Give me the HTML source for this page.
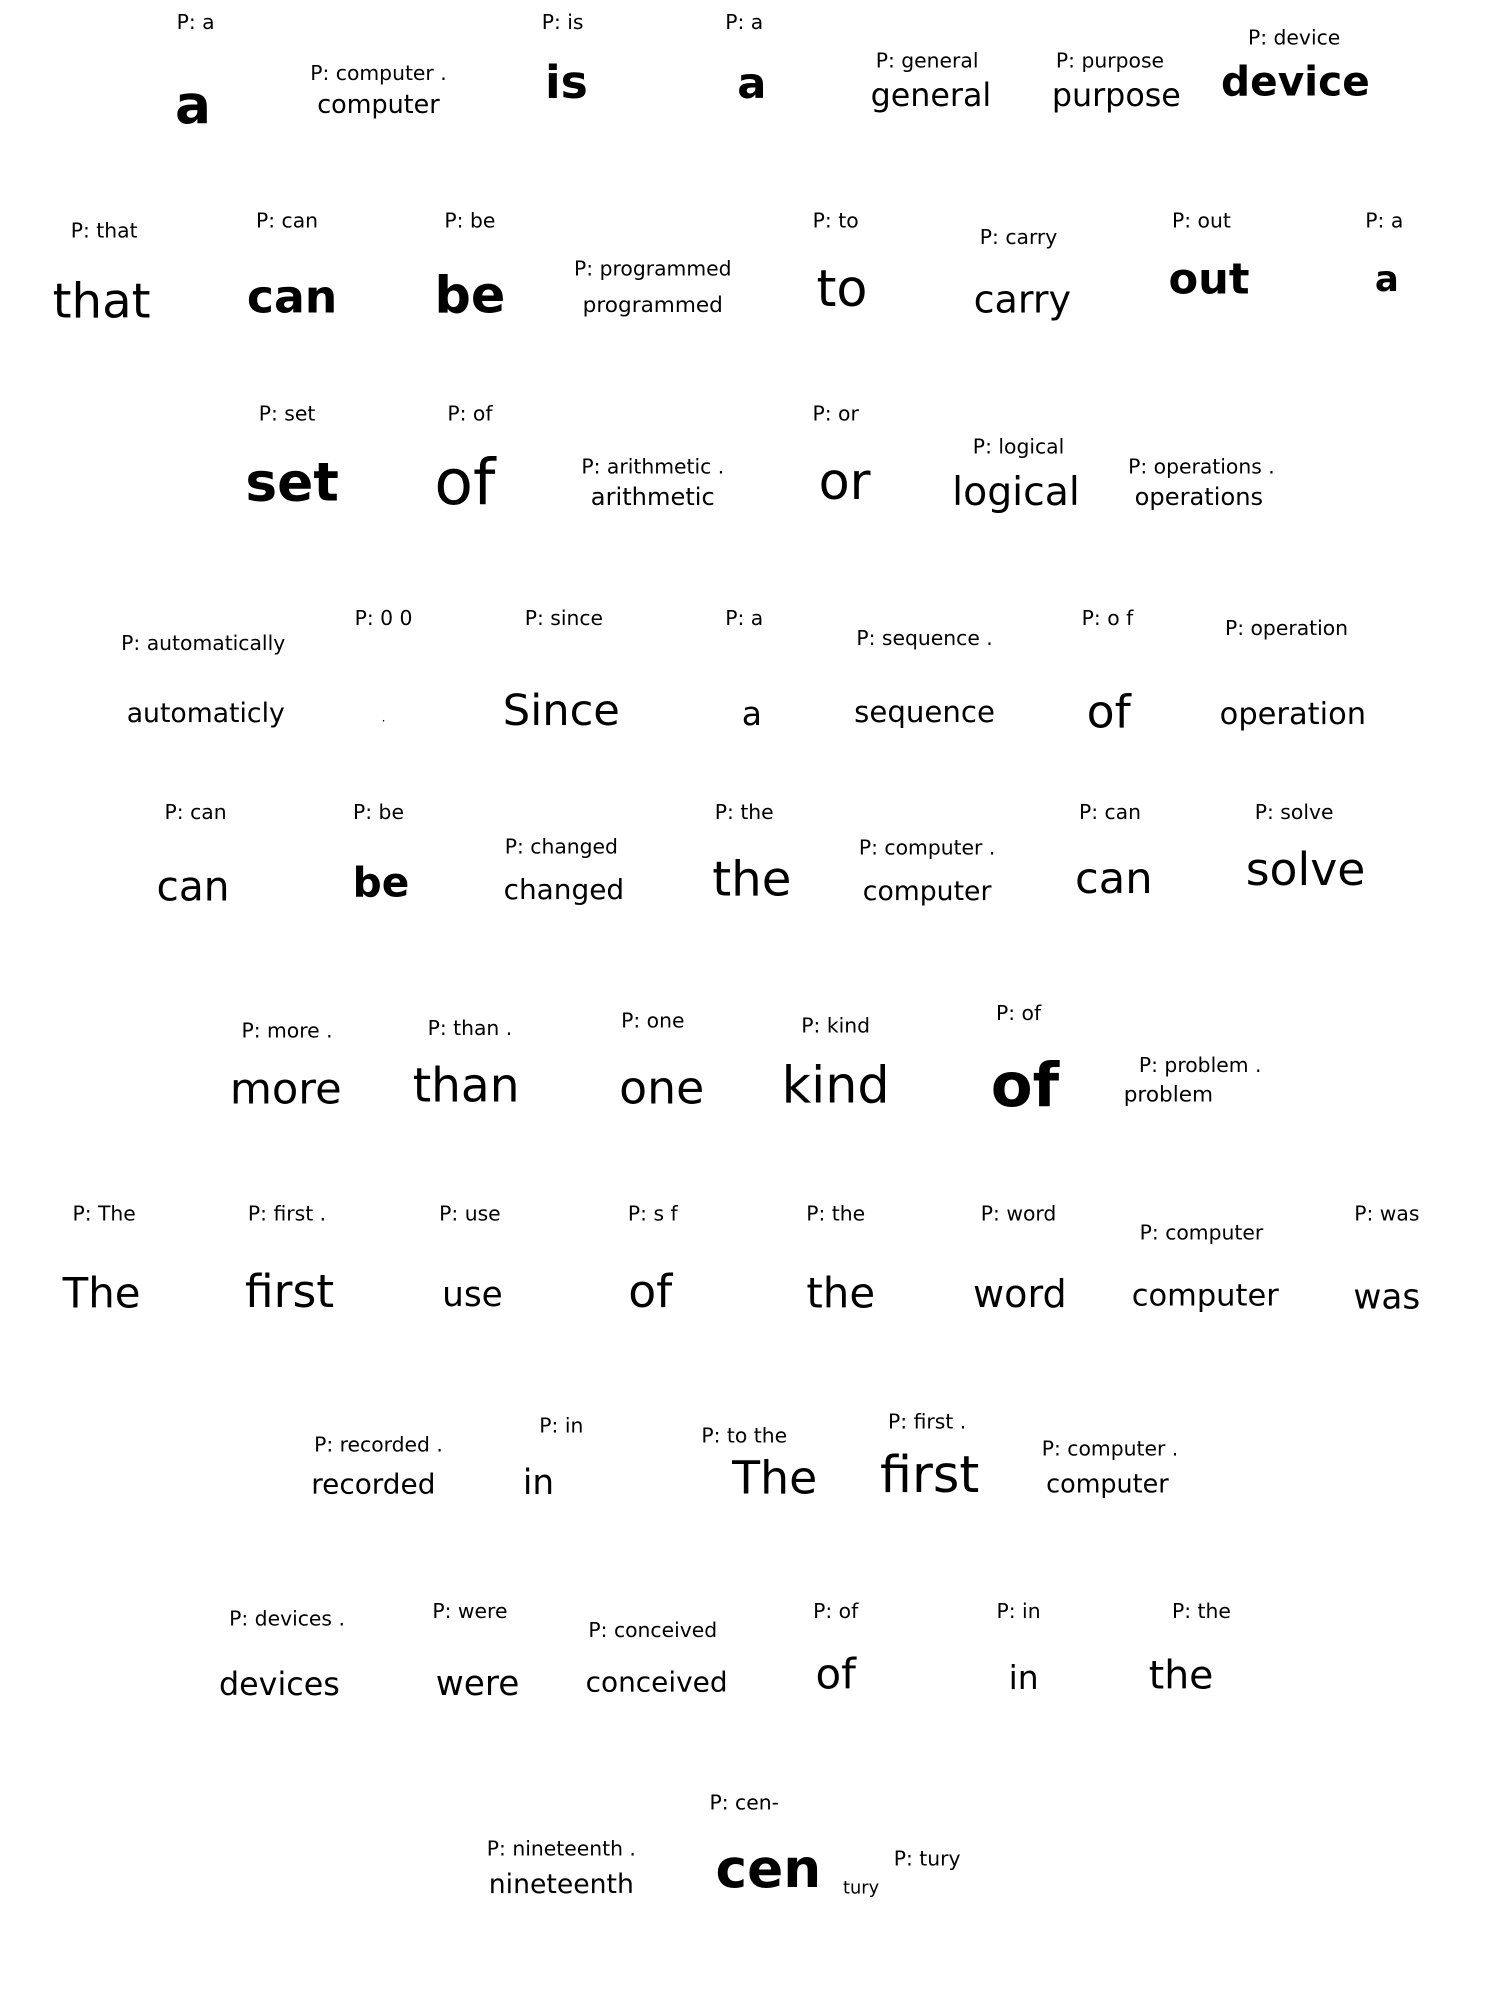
<!DOCTYPE html>
<html><head><meta charset="utf-8"><style>
html,body{margin:0;padding:0;background:#fff;width:1487px;height:1990px;overflow:hidden}
#c{position:absolute;left:0;top:0;width:1171px;height:1567px;transform:scale(1.27);transform-origin:0 0}
.l{position:absolute;transform:translateX(-50%);font:16px "DejaVu Sans","Liberation Sans",sans-serif;color:#000;white-space:nowrap;line-height:1}
.w{position:absolute;transform:translate(-50%,-50%);font-family:"DejaVu Sans","Liberation Sans",sans-serif;color:#000;white-space:nowrap;line-height:1}
.b{font-weight:bold}
</style></head><body><div id="c">
<div class="l" style="left:154px;top:10px">P: a</div><div class="w b" style="left:152px;top:83px;font-size:42px">a</div>
<div class="l" style="left:298px;top:50px">P: computer .</div><div class="w" style="left:298px;top:82px;font-size:20px">computer</div>
<div class="l" style="left:443px;top:10px">P: is</div><div class="w b" style="left:446px;top:66px;font-size:36px">is</div>
<div class="l" style="left:586px;top:10px">P: a</div><div class="w b" style="left:592px;top:66px;font-size:34px">a</div>
<div class="l" style="left:730px;top:40px">P: general</div><div class="w" style="left:733px;top:75px;font-size:25px">general</div>
<div class="l" style="left:874px;top:40px">P: purpose</div><div class="w" style="left:879px;top:75px;font-size:25px">purpose</div>
<div class="l" style="left:1019px;top:22px">P: device</div><div class="w b" style="left:1020px;top:64px;font-size:32px">device</div>

<div class="l" style="left:82px;top:174px">P: that</div><div class="w" style="left:80px;top:237px;font-size:38px">that</div>
<div class="l" style="left:226px;top:166px">P: can</div><div class="w b" style="left:230px;top:235px;font-size:36px">can</div>
<div class="l" style="left:370px;top:166px">P: be</div><div class="w b" style="left:370px;top:233px;font-size:40px">be</div>
<div class="l" style="left:514px;top:204px">P: programmed</div><div class="w" style="left:514px;top:241px;font-size:17px">programmed</div>
<div class="l" style="left:658px;top:166px">P: to</div><div class="w" style="left:663px;top:228px;font-size:40px">to</div>
<div class="l" style="left:802px;top:179px">P: carry</div><div class="w" style="left:805px;top:237px;font-size:30px">carry</div>
<div class="l" style="left:946px;top:166px">P: out</div><div class="w b" style="left:952px;top:220px;font-size:34px">out</div>
<div class="l" style="left:1090px;top:166px">P: a</div><div class="w b" style="left:1092px;top:220px;font-size:28px">a</div>

<div class="l" style="left:226px;top:318px">P: set</div><div class="w b" style="left:230px;top:380px;font-size:42px">set</div>
<div class="l" style="left:370px;top:318px">P: of</div><div class="w" style="left:366px;top:380px;font-size:50px">of</div>
<div class="l" style="left:514px;top:360px">P: arithmetic .</div><div class="w" style="left:514px;top:392px;font-size:19px">arithmetic</div>
<div class="l" style="left:658px;top:318px">P: or</div><div class="w" style="left:665px;top:380px;font-size:40px">or</div>
<div class="l" style="left:802px;top:344px">P: logical</div><div class="w" style="left:800px;top:388px;font-size:31px">logical</div>
<div class="l" style="left:946px;top:360px">P: operations .</div><div class="w" style="left:944px;top:392px;font-size:19px">operations</div>

<div class="l" style="left:160px;top:499px">P: automatically</div><div class="w" style="left:162px;top:562px;font-size:21px">automaticly</div>
<div class="l" style="left:302px;top:479px">P: 0 0</div><div class="w" style="left:302px;top:566px;font-size:10px">.</div>
<div class="l" style="left:444px;top:479px">P: since</div><div class="w" style="left:442px;top:560px;font-size:34px">Since</div>
<div class="l" style="left:586px;top:479px">P: a</div><div class="w" style="left:592px;top:563px;font-size:26px">a</div>
<div class="l" style="left:728px;top:495px">P: sequence .</div><div class="w" style="left:728px;top:562px;font-size:23px">sequence</div>
<div class="l" style="left:872px;top:479px">P: o f</div><div class="w" style="left:873px;top:562px;font-size:36px">of</div>
<div class="l" style="left:1013px;top:487px">P: operation</div><div class="w" style="left:1018px;top:562px;font-size:24px">operation</div>

<div class="l" style="left:154px;top:632px">P: can</div><div class="w" style="left:152px;top:698px;font-size:32px">can</div>
<div class="l" style="left:298px;top:632px">P: be</div><div class="w b" style="left:300px;top:695px;font-size:32px">be</div>
<div class="l" style="left:442px;top:659px">P: changed</div><div class="w" style="left:444px;top:702px;font-size:22px">changed</div>
<div class="l" style="left:586px;top:632px">P: the</div><div class="w" style="left:592px;top:692px;font-size:38px">the</div>
<div class="l" style="left:730px;top:660px">P: computer .</div><div class="w" style="left:730px;top:702px;font-size:21px">computer</div>
<div class="l" style="left:874px;top:632px">P: can</div><div class="w" style="left:877px;top:692px;font-size:34px">can</div>
<div class="l" style="left:1019px;top:632px">P: solve</div><div class="w" style="left:1028px;top:686px;font-size:36px">solve</div>

<div class="l" style="left:226px;top:804px">P: more .</div><div class="w" style="left:225px;top:858px;font-size:34px">more</div>
<div class="l" style="left:370px;top:802px">P: than .</div><div class="w" style="left:367px;top:855px;font-size:37px">than</div>
<div class="l" style="left:514px;top:796px">P: one</div><div class="w" style="left:521px;top:858px;font-size:36px">one</div>
<div class="l" style="left:658px;top:800px">P: kind</div><div class="w" style="left:658px;top:855px;font-size:40px">kind</div>
<div class="l" style="left:802px;top:790px">P: of</div><div class="w b" style="left:807px;top:855px;font-size:48px">of</div>
<div class="l" style="left:945px;top:831px">P: problem .</div><div class="w" style="left:920px;top:863px;font-size:17px">problem</div>

<div class="l" style="left:82px;top:948px">P: The</div><div class="w" style="left:80px;top:1018px;font-size:33px">The</div>
<div class="l" style="left:226px;top:948px">P: first .</div><div class="w" style="left:228px;top:1018px;font-size:36px">first</div>
<div class="l" style="left:370px;top:948px">P: use</div><div class="w" style="left:372px;top:1020px;font-size:27px">use</div>
<div class="l" style="left:514px;top:948px">P: s f</div><div class="w" style="left:512px;top:1018px;font-size:36px">of</div>
<div class="l" style="left:658px;top:948px">P: the</div><div class="w" style="left:662px;top:1018px;font-size:33px">the</div>
<div class="l" style="left:802px;top:948px">P: word</div><div class="w" style="left:803px;top:1020px;font-size:30px">word</div>
<div class="l" style="left:946px;top:963px">P: computer</div><div class="w" style="left:949px;top:1020px;font-size:24px">computer</div>
<div class="l" style="left:1092px;top:948px">P: was</div><div class="w" style="left:1092px;top:1022px;font-size:27px">was</div>

<div class="l" style="left:298px;top:1130px">P: recorded .</div><div class="w" style="left:294px;top:1170px;font-size:22px">recorded</div>
<div class="l" style="left:442px;top:1115px">P: in</div><div class="w" style="left:424px;top:1168px;font-size:27px">in</div>
<div class="l" style="left:586px;top:1123px">P: to the</div><div class="w" style="left:610px;top:1165px;font-size:36px">The</div>
<div class="l" style="left:730px;top:1112px">P: first .</div><div class="w" style="left:732px;top:1162px;font-size:40px">first</div>
<div class="l" style="left:874px;top:1133px">P: computer .</div><div class="w" style="left:872px;top:1168px;font-size:20px">computer</div>

<div class="l" style="left:226px;top:1267px">P: devices .</div><div class="w" style="left:220px;top:1326px;font-size:25px">devices</div>
<div class="l" style="left:370px;top:1261px">P: were</div><div class="w" style="left:376px;top:1326px;font-size:27px">were</div>
<div class="l" style="left:514px;top:1276px">P: conceived</div><div class="w" style="left:517px;top:1326px;font-size:22px">conceived</div>
<div class="l" style="left:658px;top:1261px">P: of</div><div class="w" style="left:658px;top:1318px;font-size:33px">of</div>
<div class="l" style="left:802px;top:1261px">P: in</div><div class="w" style="left:806px;top:1322px;font-size:26px">in</div>
<div class="l" style="left:946px;top:1261px">P: the</div><div class="w" style="left:930px;top:1320px;font-size:31px">the</div>

<div class="l" style="left:442px;top:1448px">P: nineteenth .</div><div class="w" style="left:442px;top:1484px;font-size:21px">nineteenth</div>
<div class="l" style="left:586px;top:1412px">P: cen-</div><div class="w b" style="left:605px;top:1472px;font-size:42px">cen</div>
<div class="w" style="left:678px;top:1487px;font-size:14px">tury</div>
<div class="l" style="left:730px;top:1456px">P: tury</div>
</div></body></html>
